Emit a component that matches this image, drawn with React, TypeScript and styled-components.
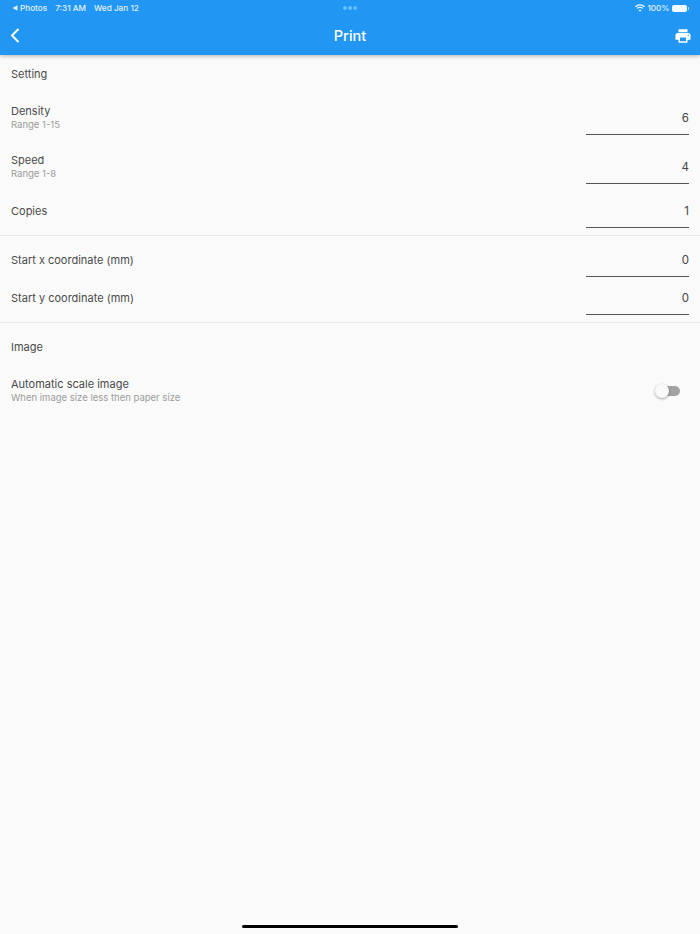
import React from 'react'
import styled, { createGlobalStyle } from 'styled-components'

const Global = createGlobalStyle`
html, body {
  margin: 0;
  padding: 0;
  background: #fafafa;
}
* { box-sizing: border-box; }
`

const Page = styled('div')`
  width: 700px;
  height: 934px;
  display: flex;
  flex-direction: column;
  overflow: hidden;
  background: #fafafa;
  font-family: Inter, "Liberation Sans", sans-serif;
`

const Header = styled('header')`
  background: #2196f3;
  color: #fff;
  height: 55px;
  box-shadow: 0 1px 4px rgba(0, 0, 0, 0.3);
  position: relative;
  z-index: 1;
`

const StatusBar = styled('div')`
  height: 17px;
  display: grid;
  grid-template-columns: 1fr auto 1fr;
  align-items: center;
  padding: 0 12px 1px 12px;
  font-size: 8.2px;
  font-weight: 500;
  color: #e3f2fd;
`

const StatusLeft = styled('div')`
  display: flex;
  align-items: center;
  gap: 8px;
`

const Carrier = styled('span')`
  display: flex;
  align-items: center;
  gap: 2px;
`

const StatusRight = styled('div')`
  display: flex;
  align-items: center;
  justify-content: flex-end;
  gap: 2.5px;
`

const Dots = styled('div')`
  display: flex;
  gap: 1px;
`

const Dot = styled('span')`
  width: 4px;
  height: 4px;
  border-radius: 50%;
  background: #5ec5fb;
`

const Battery = styled('div')`
  position: relative;
  width: 15px;
  height: 7px;
  border-radius: 2px;
  background: #f2f9ff;
  margin-right: 1px;

  &::after {
    content: '';
    position: absolute;
    left: 15.5px;
    top: 2px;
    width: 1px;
    height: 3px;
    background: #a9d8fb;
  }
`

const Toolbar = styled('div')`
  height: 38px;
  display: grid;
  grid-template-columns: 1fr auto 1fr;
  align-items: center;
  padding: 0 9px 1px 9px;
`

const Title = styled('div')`
  font-size: 14.5px;
  font-weight: 500;
  text-align: center;
`

const IconRight = styled('div')`
  display: flex;
  justify-content: flex-end;
  margin-right: -1px;
`

const IconLeft = styled('div')`
  display: flex;
  margin-left: 1px;
`

interface ISection {
  divided?: boolean
}

const Section = styled('section')<ISection>`
  padding-bottom: 7px;
  border-bottom: ${(props) => (props.divided ? '1px solid #e8e8e8' : 'none')};
`

interface ISectionTitle {
  height: number
}

const SectionTitle = styled('div')<ISectionTitle>`
  height: ${(props) => props.height}px;
  display: flex;
  align-items: center;
  padding-left: 11px;
  font-size: 11px;
  color: #4a4a4a;
`

interface IRow {
  top: number
}

const Row = styled('div')<IRow>`
  display: flex;
  align-items: center;
  justify-content: space-between;
  padding: ${(props) => props.top}px 11px 0 11px;
`

const Label = styled('div')`
  display: flex;
  flex-direction: column;
  padding-bottom: 1px;
`

const LabelText = styled('div')`
  font-size: 11px;
  line-height: 14px;
  color: #4a4a4a;
`

const SubText = styled('div')`
  font-size: 9.5px;
  line-height: 14px;
  color: #9a9a9a;
`

const Field = styled('div')`
  width: 103px;
  height: 33px;
  display: flex;
  align-items: center;
  justify-content: flex-end;
  font-size: 11.5px;
  color: #444;
  border-bottom: 1px solid #555;
`

const SwitchBox = styled('div')`
  position: relative;
  width: 32px;
  height: 32px;
  margin-right: 6px;
  display: flex;
  align-items: center;
  justify-content: flex-end;
`

const Track = styled('div')`
  width: 24px;
  height: 10px;
  border-radius: 5px;
  background: #a3a3a3;
  margin-right: 3px;
`

const Thumb = styled('div')`
  position: absolute;
  left: 4px;
  top: 9px;
  width: 14px;
  height: 14px;
  border-radius: 50%;
  background: #fafafa;
  box-shadow: 0 1px 3px rgba(0, 0, 0, 0.35);
`

const Spacer = styled('div')`
  flex: 1;
`

const HomeBar = styled('div')`
  width: 216px;
  height: 3.5px;
  border-radius: 2px;
  background: #000;
  margin: 0 auto 6px auto;
`

export default function App() {
  return (
    <Page>
      <Global />
      <Header>
        <StatusBar>
          <StatusLeft>
            <Carrier>
              <svg width="6" height="6" viewBox="0 0 6 6">
                <path d="M0.5 3 L5.5 0.3 V5.7 Z" fill="#e3f2fd" />
              </svg>
              Photos
            </Carrier>
            <span>7:31 AM</span>
            <span>Wed Jan 12</span>
          </StatusLeft>
          <Dots>
            <Dot />
            <Dot />
            <Dot />
          </Dots>
          <StatusRight>
            <svg width="10" height="8" viewBox="0 0 20 16" fill="none" stroke="#f2f9ff" strokeWidth="2.6">
              <path d="M1 5.5 C6 0.5 14 0.5 19 5.5" />
              <path d="M4.5 9 C7.5 6 12.5 6 15.5 9" />
              <path d="M10 15.5 L7.2 12.3 C8.8 11 11.2 11 12.8 12.3 Z" fill="#f2f9ff" stroke="none" />
            </svg>
            <span>100%</span>
            <Battery />
          </StatusRight>
        </StatusBar>
        <Toolbar>
          <IconLeft>
            <svg width="11" height="15" viewBox="0 0 11 15" fill="none" stroke="#fff" strokeWidth="2">
              <path d="M8.5 1 L2 7.5 L8.5 14" />
            </svg>
          </IconLeft>
          <Title>Print</Title>
          <IconRight>
            <svg width="18" height="18" viewBox="0 0 24 24" fill="#fff">
              <path d="M19 8H5c-1.66 0-3 1.34-3 3v6h4v4h12v-4h4v-6c0-1.66-1.34-3-3-3zm-3 11H8v-5h8v5zm3-7c-.55 0-1-.45-1-1s.45-1 1-1 1 .45 1 1-.45 1-1 1zm-1-9H6v4h12V3z" />
            </svg>
          </IconRight>
        </Toolbar>
      </Header>

      <Section divided>
        <SectionTitle height={38}>Setting</SectionTitle>
        <Row top={9}>
          <Label>
            <LabelText>Density</LabelText>
            <SubText>Range 1-15</SubText>
          </Label>
          <Field>6</Field>
        </Row>
        <Row top={16}>
          <Label>
            <LabelText>Speed</LabelText>
            <SubText>Range 1-8</SubText>
          </Label>
          <Field>4</Field>
        </Row>
        <Row top={11}>
          <Label>
            <LabelText>Copies</LabelText>
          </Label>
          <Field>1</Field>
        </Row>
      </Section>

      <Section divided>
        <Row top={8}>
          <Label>
            <LabelText>Start x coordinate (mm)</LabelText>
          </Label>
          <Field>0</Field>
        </Row>
        <Row top={5}>
          <Label>
            <LabelText>Start y coordinate (mm)</LabelText>
          </Label>
          <Field>0</Field>
        </Row>
      </Section>

      <Section>
        <SectionTitle height={48}>Image</SectionTitle>
        <Row top={4}>
          <Label>
            <LabelText>Automatic scale image</LabelText>
            <SubText>When image size less then paper size</SubText>
          </Label>
          <SwitchBox>
            <Track />
            <Thumb />
          </SwitchBox>
        </Row>
      </Section>

      <Spacer />
      <HomeBar />
    </Page>
  )
}
